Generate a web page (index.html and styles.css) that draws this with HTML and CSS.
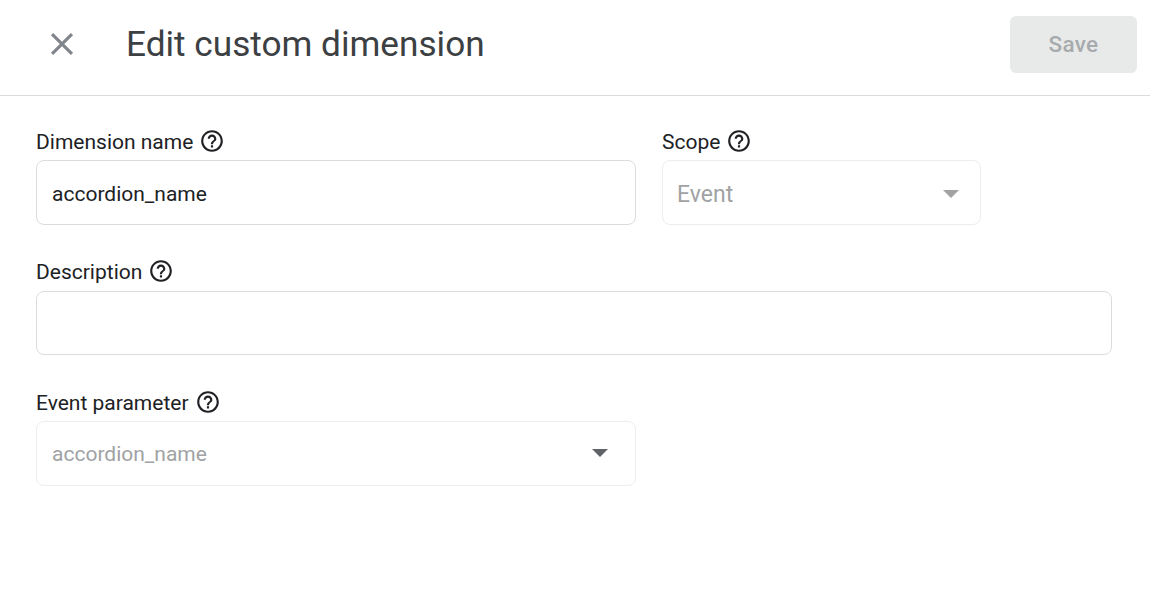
FILE: index.html
```html
<!DOCTYPE html>
<html lang="en">
<head>
<meta charset="utf-8">
<title>Edit custom dimension</title>
<link rel="stylesheet" href="styles.css">
</head>
<body>
<svg class="defs" width="0" height="0" aria-hidden="true">
  <symbol id="help" viewBox="0 0 24 24">
    <path d="M11 18h2v-2h-2v2zm1-16C6.48 2 2 6.48 2 12s4.48 10 10 10 10-4.48 10-10S17.52 2 12 2zm0 18c-4.41 0-8-3.59-8-8s3.59-8 8-8 8 3.59 8 8-3.59 8-8 8zm0-14c-2.21 0-4 1.79-4 4h2c0-1.1.9-2 2-2s2 .9 2 2c0 2-3 1.75-3 5h2c0-2.25 3-2.5 3-5 0-2.21-1.79-4-4-4z"/>
  </symbol>
</svg>
<header class="topbar">
  <button class="close" aria-label="Close">
    <svg viewBox="0 0 24 24" class="close-icon"><path d="M19 6.41 17.59 5 12 10.59 6.41 5 5 6.41 10.59 12 5 17.59 6.41 19 12 13.41 17.59 19 19 17.59 13.41 12z"/></svg>
  </button>
  <h1 class="title">Edit custom dimension</h1>
  <button class="save">Save</button>
</header>
<main class="form">
  <div class="row">
    <div class="field name-field">
      <div class="label"><span>Dimension name</span><svg class="help"><use href="#help"/></svg></div>
      <div class="box filled"><span>accordion_name</span></div>
    </div>
    <div class="field scope-field">
      <div class="label"><span>Scope</span><svg class="help"><use href="#help"/></svg></div>
      <div class="box disabled scope-box"><span>Event</span><i class="caret light"></i></div>
    </div>
  </div>
  <div class="row">
    <div class="field desc-field">
      <div class="label"><span>Description</span><svg class="help"><use href="#help"/></svg></div>
      <div class="box desc-box"></div>
    </div>
  </div>
  <div class="row">
    <div class="field name-field">
      <div class="label"><span>Event parameter</span><svg class="help"><use href="#help"/></svg></div>
      <div class="box disabled"><span>accordion_name</span><i class="caret dark"></i></div>
    </div>
  </div>
</main>
</body>
</html>
```
FILE: styles.css
```css
* { box-sizing: border-box; }
html, body { margin: 0; padding: 0; }
body {
  width: 1150px;
  height: 600px;
  background: #fff;
  font-family: Roboto, "Liberation Sans", sans-serif;
  color: #202124;
  overflow: hidden;
}
.defs { position: absolute; }
.topbar {
  display: flex;
  align-items: center;
  height: 96px;
  padding: 0 13px 7px 38px;
  border-bottom: 1px solid #dadce0;
}
.close {
  width: 48px;
  height: 48px;
  padding: 0;
  border: 0;
  background: none;
  display: flex;
  align-items: center;
  justify-content: center;
}
.close-icon { width: 38px; height: 38px; fill: #80868b; }
.title {
  margin: 0 0 0 40px;
  flex: 1;
  font-size: 35.2px;
  line-height: 46px;
  font-weight: 400;
  color: #3c4043;
}
.save {
  width: 127px;
  height: 57px;
  padding: 0;
  border: 0;
  border-radius: 6px;
  background: #e8eaea;
  color: #a8abad;
  font: 500 22.5px Roboto, sans-serif;
  letter-spacing: .3px;
}
.form {
  display: flex;
  flex-direction: column;
  gap: 33px;
  padding: 31px 0 0 36px;
}
.row { display: flex; gap: 26px; }
.field { display: flex; flex-direction: column; }
.name-field { width: 600px; }
.scope-field { width: 319px; }
.desc-field { width: 1076px; }
.label {
  display: flex;
  align-items: center;
  gap: 6px;
  height: 33px;
  padding-bottom: 2px;
  font-size: 21px;
  line-height: 29px;
  color: #202124;
}
.desc-field .label { padding-bottom: 4px; }
.help { width: 26px; height: 26px; margin-top: -3px; fill: #202124; }
.box {
  display: flex;
  align-items: center;
  justify-content: space-between;
  height: 65px;
  padding: 0 22px 0 15px;
  border: 1px solid #dadce0;
  border-radius: 8px;
  font-size: 21px;
  color: #202124;
}
.filled span { position: relative; top: 1px; }
.desc-box { height: 64px; }
.disabled {
  border-color: #ebedef;
  color: #a0a2a4;
}
.scope-box { font-size: 23px; padding: 2px 21px 0 14px; }
.scope-box span { position: relative; top: 1px; }
.caret {
  width: 0;
  height: 0;
  border-left: 8.5px solid transparent;
  border-right: 8.5px solid transparent;
  border-top: 8.5px solid #5f6368;
}
.caret.light { border-top-color: #a0a2a4; }
.caret.dark { margin-right: 5px; margin-bottom: 1px; }
```
